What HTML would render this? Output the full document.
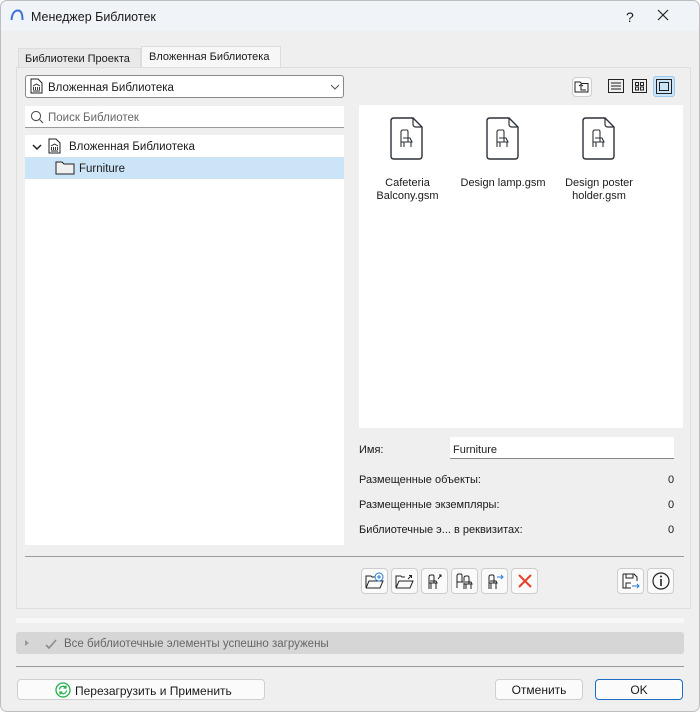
<!DOCTYPE html>
<html><head><meta charset="utf-8"><style>
*{box-sizing:border-box;margin:0;padding:0}
body{width:700px;height:712px;background:#fff;font-family:"Segoe UI","Liberation Sans","DejaVu Sans",sans-serif;font-size:12px;color:#1a1a1a;overflow:hidden;position:relative}
.win{position:absolute;left:0;top:0;width:700px;height:712px;background:#efefef;box-shadow:inset 0 0 0 1px #bdbdbd;border-radius:7px;overflow:hidden}
.abs{position:absolute;white-space:nowrap}
.t{margin-top:1.5px}
.title{left:1px;top:1px;width:698px;height:30px;background:#f0f3f8;border-radius:7px 7px 0 0}
.tab{height:21px;top:46px;border:1px solid #dcdcdc;border-bottom:none;padding:4px 6px 0;font-size:11px}
.box{background:#fff}
.btn{background:#fbfbfb;border:1px solid #cfcfcf;border-radius:4px}
.ib{width:27px;height:26px;top:568px;background:#fafafa;border:1px solid #cdcdcd;border-radius:4px}
.ib svg{position:absolute;left:3px;top:3px}
.lbl{font-size:11px}
</style></head><body><div class="win">
<div class="abs title"></div>
<svg class="abs" style="left:10px;top:9px" width="14" height="12"><path d="M1.5 11 C2 4 5 1.5 8 1.5 C11 1.5 12.5 5 12.5 11" fill="none" stroke="#3a6fd8" stroke-width="2"/></svg>
<div class="abs t" style="left:31px;top:8px;font-size:12.5px">Менеджер Библиотек</div>
<div class="abs t" style="left:626px;top:7px;font-size:14px">?</div>
<svg class="abs" style="left:657px;top:9px" width="12" height="12"><path d="M1 1L11 11M11 1L1 11" stroke="#222" stroke-width="1.2"/></svg>

<div class="abs tab" style="left:18px;width:123px;top:48px;height:19px;background:#e9e9e9;padding:4px 0 0 6px">Библиотеки Проекта</div>
<div class="abs tab" style="left:141px;width:140px;background:#f7f7f7;padding:4px 0 0 7px">Вложенная Библиотека</div>
<div class="abs" style="left:16px;top:67px;width:675px;height:542px;border:1px solid #dedede;background:#efefef"></div>

<div class="abs box" style="left:25px;top:75px;width:319px;height:23px;border:1px solid #888;border-radius:3px"></div>
<svg class="abs" style="left:30px;top:78px" width="13" height="16"><path d="M1 1H8L12 5V15H1Z" fill="#fff" stroke="#222"/><path d="M3 8L6.5 6L10 8M3.5 9V12M5.5 9V12M7.5 9V12M9.5 9V12M3 13H10" stroke="#222" fill="none" stroke-width=".9"/></svg>
<div class="abs t" style="left:48px;top:80px;font-size:11.5px">Вложенная Библиотека</div>
<svg class="abs" style="left:330px;top:84px" width="10" height="6"><path d="M1 1L5 5L9 1" fill="none" stroke="#555"/></svg>

<div class="abs box" style="left:25px;top:106px;width:319px;height:22px;border-bottom:1px solid #999"></div>
<svg class="abs" style="left:30px;top:110px" width="14" height="14"><circle cx="6" cy="6" r="4.6" fill="none" stroke="#555" stroke-width="1.1"/><path d="M9.5 9.5L13 13" stroke="#555" stroke-width="1.2"/></svg>
<div class="abs t" style="left:48px;top:110px;font-size:11.5px;color:#666">Поиск Библиотек</div>

<div class="abs box" style="left:25px;top:135px;width:319px;height:410px"></div>
<svg class="abs" style="left:32px;top:143px" width="10" height="8"><path d="M1 2L5 6L9 2" fill="none" stroke="#222" stroke-width="1.5"/></svg>
<svg class="abs" style="left:48px;top:138px" width="13" height="16"><path d="M1 1H8L12 5V15H1Z" fill="#fff" stroke="#222"/><path d="M3 8L6.5 6L10 8M3.5 9V12M5.5 9V12M7.5 9V12M9.5 9V12M3 13H10" stroke="#222" fill="none" stroke-width=".9"/></svg>
<div class="abs t" style="left:69px;top:139px;font-size:11.5px">Вложенная Библиотека</div>
<div class="abs" style="left:25px;top:157px;width:319px;height:22px;background:#cce4f7"></div>
<svg class="abs" style="left:55px;top:160px" width="20" height="15"><path d="M1 2H7L9 4H19V14H1Z" fill="#f0f0f0" stroke="#222"/></svg>
<div class="abs t" style="left:79px;top:161px;font-size:11.5px">Furniture</div>

<div class="abs btn" style="left:572px;top:77px;width:20px;height:20px"></div>
<svg class="abs" style="left:574px;top:80px" width="16" height="14"><path d="M1 2H6L7.5 3.5H14V12H1Z" fill="none" stroke="#222"/><path d="M5 6L7 4.5L9 6M7 4.5V10H12" fill="none" stroke="#222"/></svg>
<svg class="abs" style="left:608px;top:79px" width="17" height="15"><rect x=".5" y=".5" width="15" height="13" fill="none" stroke="#222"/><path d="M3 4H13M3 7H13M3 10H13" stroke="#222"/></svg>
<svg class="abs" style="left:632px;top:79px" width="16" height="15"><rect x=".5" y=".5" width="14" height="13" fill="none" stroke="#222"/><rect x="3.5" y="3.5" width="3" height="3" fill="none" stroke="#222"/><rect x="8.5" y="3.5" width="3" height="3" fill="none" stroke="#222"/><rect x="3.5" y="8" width="3" height="3" fill="none" stroke="#222"/><rect x="8.5" y="8" width="3" height="3" fill="none" stroke="#222"/></svg>
<div class="abs" style="left:653px;top:76px;width:22px;height:21px;background:#cce4f7;border:1px solid #99c9ef;border-radius:3px"></div>
<svg class="abs" style="left:656px;top:79px" width="16" height="15"><rect x=".5" y=".5" width="15" height="14" fill="none" stroke="#222"/><rect x="3.5" y="3.5" width="9" height="8" fill="none" stroke="#222"/></svg>

<div class="abs box" style="left:359px;top:105px;width:324px;height:323px"></div>
<svg class="abs" style="left:390px;top:117px" width="35" height="45"><path d="M4 1H23L32 10V39Q32 42 29 42H4Q1 42 1 39V4Q1 1 4 1Z" fill="#fff" stroke="#2c3138" stroke-width="1.4"/><path d="M23 1V7Q23 10 26 10H32" fill="none" stroke="#2c3138" stroke-width="1.2"/><path d="M11 30V15Q11 13 13 13H17Q18 13 18 15V25M11 25H22L20 21H13M14 25V30M21 25V30" fill="none" stroke="#2c3138" stroke-width="1.1"/></svg>
<svg class="abs" style="left:486px;top:117px" width="35" height="45"><path d="M4 1H23L32 10V39Q32 42 29 42H4Q1 42 1 39V4Q1 1 4 1Z" fill="#fff" stroke="#2c3138" stroke-width="1.4"/><path d="M23 1V7Q23 10 26 10H32" fill="none" stroke="#2c3138" stroke-width="1.2"/><path d="M11 30V15Q11 13 13 13H17Q18 13 18 15V25M11 25H22L20 21H13M14 25V30M21 25V30" fill="none" stroke="#2c3138" stroke-width="1.1"/></svg>
<svg class="abs" style="left:582px;top:117px" width="35" height="45"><path d="M4 1H23L32 10V39Q32 42 29 42H4Q1 42 1 39V4Q1 1 4 1Z" fill="#fff" stroke="#2c3138" stroke-width="1.4"/><path d="M23 1V7Q23 10 26 10H32" fill="none" stroke="#2c3138" stroke-width="1.2"/><path d="M11 30V15Q11 13 13 13H17Q18 13 18 15V25M11 25H22L20 21H13M14 25V30M21 25V30" fill="none" stroke="#2c3138" stroke-width="1.1"/></svg>
<div class="abs lbl t" style="left:370px;top:175px;width:75px;text-align:center;line-height:13px">Cafeteria<br>Balcony.gsm</div>
<div class="abs lbl t" style="left:455px;top:175px;width:96px;text-align:center;line-height:13px">Design lamp.gsm</div>
<div class="abs lbl t" style="left:558px;top:175px;width:82px;text-align:center;line-height:13px">Design poster<br>holder.gsm</div>

<div class="abs lbl t" style="left:359px;top:442px">Имя:</div>
<div class="abs box" style="left:450px;top:437px;width:224px;height:22px;border-bottom:1px solid #888"></div>
<div class="abs lbl t" style="left:453px;top:442px">Furniture</div>
<div class="abs lbl t" style="left:359px;top:472px">Размещенные объекты:</div>
<div class="abs lbl t" style="left:359px;top:497px">Размещенные экземпляры:</div>
<div class="abs lbl t" style="left:359px;top:522px">Библиотечные э... в реквизитах:</div>
<div class="abs lbl t" style="left:668px;top:472px">0</div>
<div class="abs lbl t" style="left:668px;top:497px">0</div>
<div class="abs lbl t" style="left:668px;top:522px">0</div>

<div class="abs" style="left:25px;top:556px;width:659px;height:1px;background:#9a9a9a"></div>
<div class="abs ib" style="left:361px"><svg width="20" height="18"><path d="M1 16V4H6L7 5H10M1 16H15L18 9H4L1 16" fill="none" stroke="#222"/><circle cx="14" cy="5" r="4" fill="#fff" stroke="#2a7ad6"/><path d="M14 3V7M12 5H16" stroke="#2a7ad6"/></svg></div>
<div class="abs ib" style="left:391px"><svg width="20" height="18"><path d="M1 16V4H6L7 5H10M1 16H15L18 9H4L1 16" fill="none" stroke="#222"/><path d="M13 7L16 4M14 3.5H16.5V6" fill="none" stroke="#222"/></svg></div>
<div class="abs ib" style="left:421px"><svg width="20" height="18"><path d="M4 17V5Q4 3 6 3H8Q9 3 9 5V11M4 11H12L11 9H5M6 11V17M11 11V17" fill="none" stroke="#222"/><path d="M13 7L16 3M14 3H16V5" fill="none" stroke="#222"/></svg></div>
<div class="abs ib" style="left:451px"><svg width="20" height="18"><path d="M2 16V4Q2 2 4 2H6Q7 2 7 4V10M2 10H8M9 17V6Q9 4 11 4H13Q14 4 14 6V12M9 12H17L16 10H10M11 12V17M16 12V17" fill="none" stroke="#222"/></svg></div>
<div class="abs ib" style="left:481px"><svg width="20" height="18"><path d="M4 17V5Q4 3 6 3H8Q9 3 9 5V11M4 11H12L11 9H5M6 11V17M11 11V17" fill="none" stroke="#222"/><path d="M12 5H18M16 3L18 5L16 7" fill="none" stroke="#2a7ad6"/></svg></div>
<div class="abs ib" style="left:511px"><svg width="20" height="18"><path d="M4 3L16 15M16 3L4 15" stroke="#e8402a" stroke-width="2"/></svg></div>
<div class="abs ib" style="left:617px"><svg width="20" height="18"><path d="M2 2H13L16 5V9M2 2V16H10M5 2V6H12V2M5 16V11H10" fill="none" stroke="#222"/><path d="M11 14H18M16 12L18 14L16 16" fill="none" stroke="#2a7ad6"/></svg></div>
<div class="abs ib" style="left:647px"><svg width="20" height="18"><circle cx="10" cy="9" r="8" fill="none" stroke="#222" stroke-width="1.2"/><path d="M10 7V14" stroke="#222" stroke-width="1.6"/><circle cx="10" cy="4.5" r="1" fill="#222"/></svg></div>

<div class="abs" style="left:16px;top:618px;width:668px;height:5px;background:#f7f7f7"></div>
<div class="abs" style="left:16px;top:632px;width:668px;height:22px;background:#d6d6d6;border-radius:3px"></div>
<svg class="abs" style="left:24px;top:639px" width="6" height="8"><path d="M1 1L5 4L1 7Z" fill="#999"/></svg>
<svg class="abs" style="left:45px;top:639px" width="12" height="10"><path d="M1 6L4 9L11 1" fill="none" stroke="#8a8a8a" stroke-width="1.6"/></svg>
<div class="abs t" style="left:64px;top:636px;font-size:11.5px;color:#666">Все библиотечные элементы успешно загружены</div>
<div class="abs" style="left:16px;top:666px;width:668px;height:1px;background:#9a9a9a"></div>

<div class="abs btn" style="left:17px;top:679px;width:248px;height:21px"></div>
<svg class="abs" style="left:55px;top:682px" width="16" height="16"><circle cx="8" cy="8" r="7" fill="#fff" stroke="#1fae4a" stroke-width="1.3"/><path d="M4.5 7.5A3.5 3.5 0 0 1 11 6M11.5 8.5A3.5 3.5 0 0 1 5 10M11 3.5V6H8.5M5 12.5V10H7.5" fill="none" stroke="#1fae4a" stroke-width="1.2"/></svg>
<div class="abs t" style="left:75px;top:682px;font-size:12px">Перезагрузить и Применить</div>
<div class="abs btn" style="left:495px;top:679px;width:88px;height:21px;text-align:center;padding-top:3px;font-size:12px">Отменить</div>
<div class="abs btn" style="left:595px;top:679px;width:88px;height:21px;border:1px solid #1b6ec2;text-align:center;padding-top:3px;font-size:12px">OK</div>
</div></body></html>
